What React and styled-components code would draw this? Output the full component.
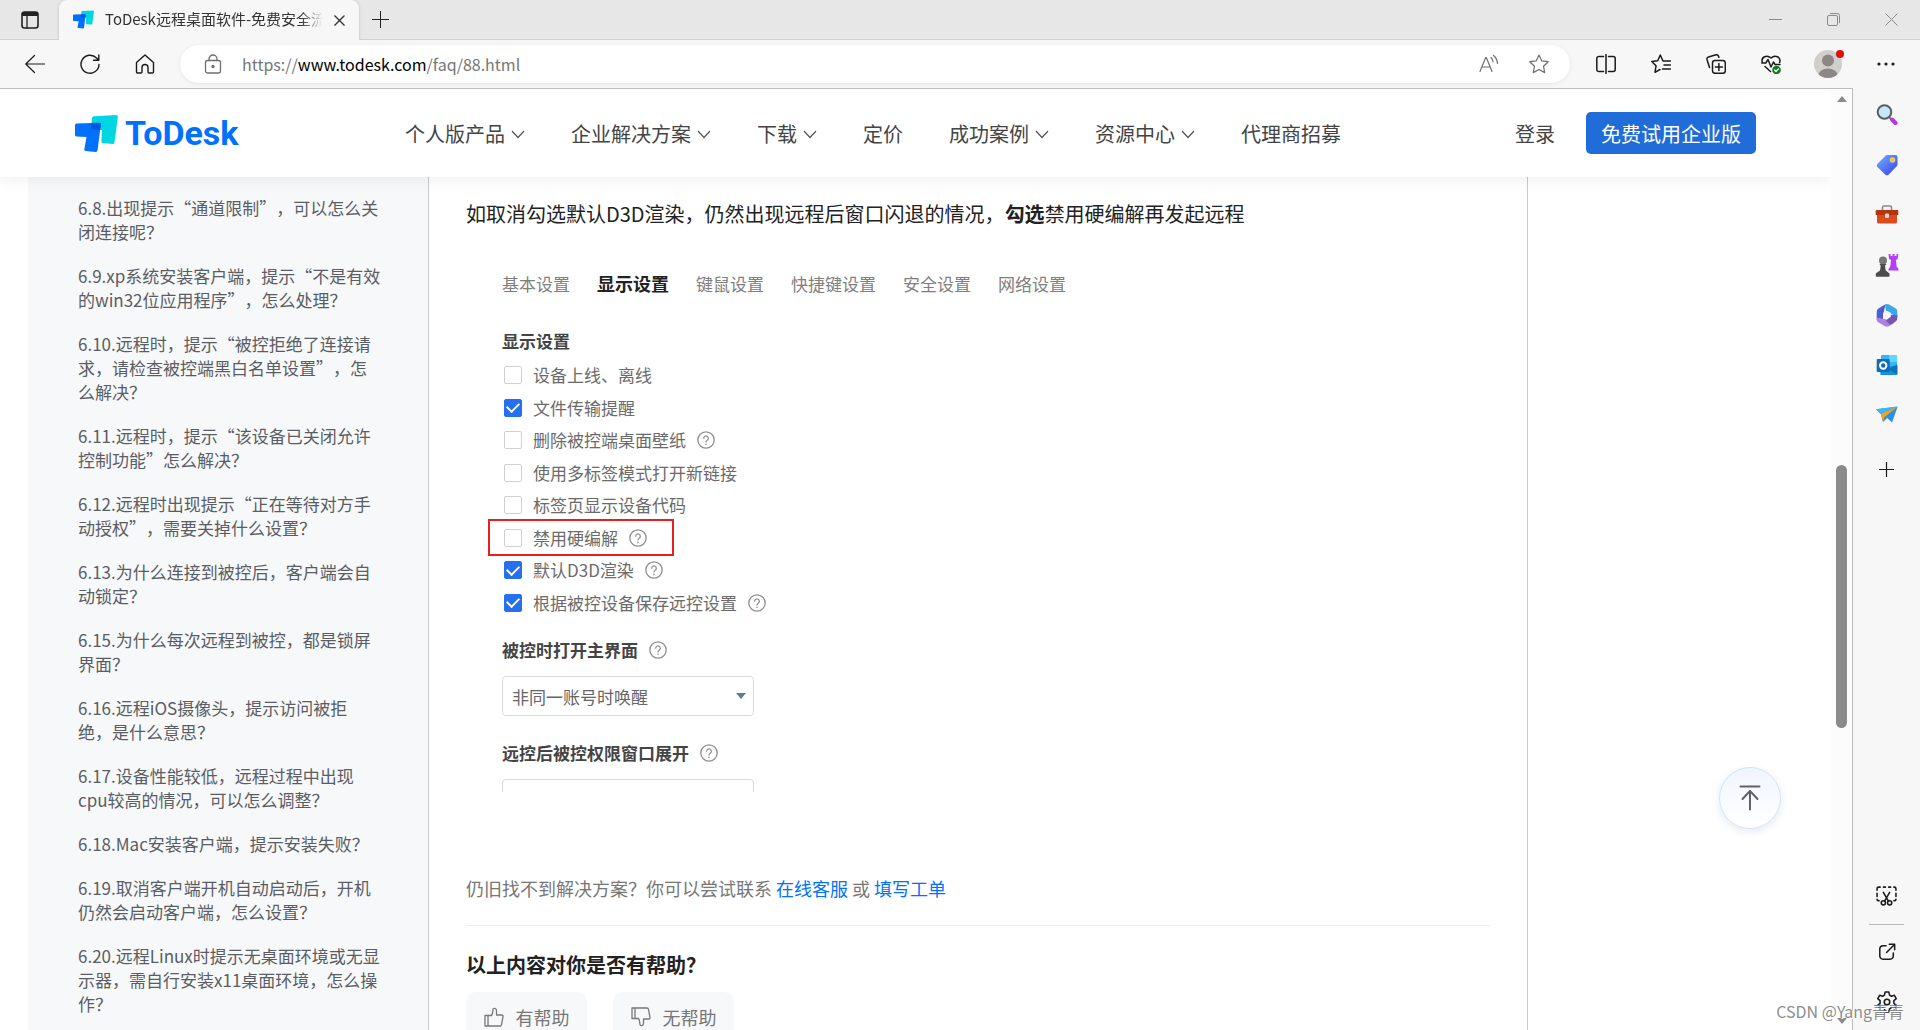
import React from 'react'
import styled, { createGlobalStyle } from 'styled-components'

const GlobalStyle = createGlobalStyle`
  * {
    box-sizing: border-box;
  }
  html, body, #root {
    height: 100%;
  }
  body {
    margin: 0;
    overflow: hidden;
    background: #fff;
    font-family: 'Noto Sans CJK SC', 'Noto Sans', sans-serif;
  }
  button, select, input {
    font-family: inherit;
    margin: 0;
  }
  button {
    border: 0;
    padding: 0;
    background: none;
    cursor: pointer;
  }
  a {
    text-decoration: none;
    color: inherit;
  }
  svg {
    display: block;
    flex: none;
  }
`

const faqs = [
  '6.8.出现提示“通道限制”，可以怎么关闭连接呢？',
  '6.9.xp系统安装客户端，提示“不是有效的win32位应用程序”，怎么处理？',
  '6.10.远程时，提示“被控拒绝了连接请求，请检查被控端黑白名单设置”，怎么解决？',
  '6.11.远程时，提示“该设备已关闭允许控制功能”怎么解决？',
  '6.12.远程时出现提示“正在等待对方手动授权”，需要关掉什么设置？',
  '6.13.为什么连接到被控后，客户端会自动锁定？',
  '6.15.为什么每次远程到被控，都是锁屏界面？',
  '6.16.远程iOS摄像头，提示访问被拒\n绝，是什么意思？',
  '6.17.设备性能较低，远程过程中出现cpu较高的情况，可以怎么调整？',
  '6.18.Mac安装客户端，提示安装失败？',
  '6.19.取消客户端开机自动启动后，开机仍然会启动客户端，怎么设置？',
  '6.20.远程Linux时提示无桌面环境或无显示器，需自行安装x11桌面环境，怎么操作？',
]

const navItems = [
  { text: '个人版产品', menu: true },
  { text: '企业解决方案', menu: true },
  { text: '下载', menu: true },
  { text: '定价' },
  { text: '成功案例', menu: true },
  { text: '资源中心', menu: true },
  { text: '代理商招募' },
]

const settingTabs = ['基本设置', '显示设置', '键鼠设置', '快捷键设置', '安全设置', '网络设置']

const options = [
  { id: 'online', text: '设备上线、离线' },
  { id: 'transfer', text: '文件传输提醒', checked: true },
  { id: 'wallpaper', text: '删除被控端桌面壁纸', help: true },
  { id: 'tabs', text: '使用多标签模式打开新链接' },
  { id: 'code', text: '标签页显示设备代码' },
  { id: 'codec', text: '禁用硬编解', help: true, marked: true },
  { id: 'd3d', text: '默认D3D渲染', checked: true, help: true },
  { id: 'save', text: '根据被控设备保存远控设置', checked: true, help: true },
]

/* ---------- icons ---------- */

const Icon = ({ size = 20, width = 1.2, children, ...rest }) => (
  <svg
    width={size}
    height={size}
    viewBox='0 0 20 20'
    fill='none'
    stroke='currentColor'
    strokeWidth={width}
    strokeLinecap='round'
    strokeLinejoin='round'
    aria-hidden='true'
    {...rest}
  >
    {children}
  </svg>
)

const LogoMark = ({ width, height }) => (
  <svg width={width} height={height} viewBox='0 0 43 37' aria-hidden='true'>
    <path d='M19 1.2 41.500 0Q43 0 42.900 1.500L39.500 27.500Q39.300 29 37.800 28.900L27.500 28Q26.300 27.800 26.400 26.500L27 15 17.500 14.500Q16 14.300 16.100 13L17 3Q17.200 1.300 19 1.200Z' fill='#00d5e2' />
    <path d='M1.500 8.500 24.500 7.800Q26 7.800 25.900 9.300L22.500 35.500Q22.200 37 20.800 36.900L10.500 36Q9.200 35.800 9.300 34.500L11.500 22 1.400 21.500Q0 21.400 0 20L0 10Q0 8.600 1.500 8.500Z' fill='#0071ff' />
    <path d='M16.500 8.100 24.500 7.800Q26 7.800 25.900 9.300L25 14.900 17.500 14.500Q16 14.300 16.100 13Z' fill='#0056e0' />
  </svg>
)

const Chevron = () => (
  <svg width='14' height='9' viewBox='0 0 14 9' fill='none' stroke='#555' strokeWidth='1.2' aria-hidden='true'>
    <path d='M1 1 7 7.500 13 1' />
  </svg>
)

const HelpIcon = () => (
  <svg width='18' height='18' viewBox='0 0 18 18' fill='none' stroke='#8f8f8f' strokeWidth='1.300' strokeLinecap='round' aria-hidden='true'>
    <circle cx='9' cy='9' r='8.200' />
    <path d='M6.700 7.200a2.300 2.300 0 1 1 3.500 2c-.9.500-1.200.9-1.200 1.700' />
    <path d='M9 13.200v.1' strokeWidth='1.600' />
  </svg>
)

const ThumbIcon = ({ down }) => (
  <Icon width={1.3} transform={down ? 'scale(1 -1)' : undefined}>
    <path d='M1 8.500h3v10.500H1zM4 8.500h3.500c1.200-1.500 1.300-3.500 1.500-6C9.200.7 12.500.8 12.500 3.500v4.500h5.300c1 0 1.400.7 1.200 1.600l-1.500 8c-.2.900-.7 1.400-1.500 1.400H4' />
  </Icon>
)

/* ---------- browser frame ---------- */

const Browser = styled.div`
  height: 100%;
  display: flex;
  flex-direction: column;
  background: #f7f7f7;
`

const TabStrip = styled.div`
  display: flex;
  height: 40px;
  flex: none;
  background: #e7e7e7;
  box-shadow: inset 0 -1px #d2d2d2;
  color: #222;
`

const StripButton = styled.button`
  display: grid;
  place-items: center;
  width: ${(p) => p.$width || 58}px;
  height: 32px;
  align-self: flex-start;
  padding-left: ${(p) => p.$left || 0}px;
  padding-top: ${(p) => p.$top || 0}px;
  color: ${(p) => p.$color || '#222'};
`

const Tab = styled.div`
  display: flex;
  align-items: center;
  gap: 11px;
  width: 300px;
  margin-left: 1px;
  padding: 0 14px;
  background: #f7f7f7;
  border-radius: 8px 8px 0 0;
  box-shadow: 0 0 3px #bbb;
  clip-path: inset(0 -4px 0 -4px);
`

const TabTitle = styled.span`
  flex: 1;
  min-width: 0;
  white-space: nowrap;
  font-size: 15px;
  line-height: 24px;
  margin-top: -2px;
  color: #333;
  mask-image: linear-gradient(to right, #000 90%, transparent);
`

const TabMark = styled.span`
  margin-top: -1px;
`

const WindowButtons = styled.div`
  display: flex;
  margin-left: auto;
  color: #8a8a8a;
`

const Toolbar = styled.div`
  display: flex;
  align-items: center;
  height: 48px;
  flex: none;
  color: #1b1b1b;
`

const ToolButton = styled.button`
  display: grid;
  place-items: center;
  position: relative;
  width: ${(p) => p.$width || 55}px;
  height: 40px;
  color: ${(p) => p.$color || '#1b1b1b'};
`

const NavButtons = styled.div`
  display: flex;
  width: 180px;
  padding-left: 7px;
`

const ToolButtons = styled.div`
  display: flex;
  align-items: center;
  padding: 0 7px 0 8px;
`

const AddressBar = styled.div`
  display: flex;
  align-items: center;
  flex: 1;
  height: 38px;
  padding: 0 6px 0 23px;
  border-radius: 19px;
  background: #fff;
  box-shadow: 0 1px 4px rgba(0, 0, 0, 0.08);
  color: #6f6f6f;
`

const Url = styled.a`
  flex: 1;
  margin-left: 19px;
  font-size: 16px;
  line-height: 24px;
  color: #767676;
  b {
    font-weight: 400;
    color: #000;
  }
`

const AddressButton = styled(ToolButton)`
  width: 50px;
  color: #6f6f6f;
`

const Avatar = styled.span`
  display: block;
  width: 28px;
  height: 28px;
  border-radius: 50%;
  background: #d1cfcc;
  overflow: hidden;
`

const AlertDot = styled.span`
  position: absolute;
  top: 6px;
  right: 14px;
  width: 8px;
  height: 8px;
  border-radius: 50%;
  background: #e30b0b;
`

const Body = styled.div`
  display: flex;
  flex: 1;
  min-height: 0;
`

/* ---------- side rail ---------- */

const Rail = styled.aside`
  display: flex;
  flex-direction: column;
  align-items: center;
  width: 67px;
  padding: 2px 0 3px;
`

const RailButton = styled.button`
  display: grid;
  place-items: center;
  width: 50px;
  height: ${(p) => p.$height || 50}px;
  color: #1b1b1b;
`

const RailRule = styled.hr`
  width: 35px;
  margin: 4px 0 2px;
  border: 0;
  border-top: 1px solid #b9b9b9;
`

const Spacer = styled.div`
  flex: 1;
`

/* ---------- web page ---------- */

const Viewport = styled.div`
  display: flex;
  flex: 1;
  min-width: 0;
  border-top: 1px solid #bdbdbd;
  border-right: 1px solid #bdbdbd;
  background: #fff;
`

const Page = styled.div`
  display: flex;
  flex-direction: column;
  flex: 1;
  min-width: 0;
  overflow: hidden;
  position: relative;
`

const Header = styled.header`
  display: flex;
  align-items: center;
  height: 88px;
  flex: none;
  padding: 0 75px;
  background: #fff;
  box-shadow: 0 4px 14px rgba(0, 0, 0, 0.06);
  position: relative;
  z-index: 1;
  font-size: 20px;
  color: #444;
`

const Brand = styled.a`
  display: flex;
  align-items: center;
  gap: 7px;
  width: 330px;
  font-family: Roboto, sans-serif;
  font-size: 34px;
  font-weight: 700;
  line-height: 37px;
  color: #0071ff;
`

const Nav = styled.nav`
  display: flex;
  gap: 46px;
  flex: 1;
`

const NavLink = styled.a`
  display: flex;
  align-items: center;
  gap: 6px;
  padding-top: 2px;
  line-height: 30px;
  white-space: nowrap;
`

const TrialButton = styled.button`
  height: 42px;
  margin-left: 31px;
  padding: 0 15px;
  border-radius: 5px;
  background: #206cd8;
  color: #fff;
  font-size: 20px;
`

const Columns = styled.div`
  display: flex;
  flex: 1;
  min-height: 0;
  padding-left: 28px;
`

const FaqList = styled.ul`
  display: flex;
  flex-direction: column;
  gap: 20px;
  width: 401px;
  flex: none;
  margin: 0;
  padding: 19px 46px 0 50px;
  border-right: 1px solid #c9cacd;
  background: #f7f8fa;
  list-style: none;
  font-size: 17px;
  line-height: 24px;
  text-spacing-trim: space-all;
  white-space: pre-line;
  color: #5a5d63;
`

const Article = styled.main`
  flex: 1;
  margin-right: 303px;
  padding: 19px 37px 0;
  border-right: 1px solid #c9cacd;
  overflow: hidden;
`

const Lead = styled.p`
  margin: 0;
  font-size: 20px;
  line-height: 36px;
  color: #222;
`

const Panel = styled.section`
  height: 560px;
  margin: 0 0 81px 16px;
  padding: 38px 0 0 20px;
  overflow: hidden;
  font-size: 17px;
  color: #6b6b6b;
`

const TabRow = styled.div`
  display: flex;
  gap: 27px;
  line-height: 32px;
`

const SettingTab = styled.button`
  font-size: ${(p) => (p.$active ? 18 : 17)}px;
  font-weight: ${(p) => (p.$active ? 700 : 400)};
  color: ${(p) => (p.$active ? '#222' : '#808080')};
`

const GroupTitle = styled.h3`
  display: flex;
  align-items: center;
  gap: 11px;
  margin: ${(p) => p.$top}px 0 0;
  font-size: 17px;
  line-height: 32px;
  color: #444;
`

const OptionList = styled.div`
  display: grid;
  grid-auto-rows: 1fr;
  justify-items: start;
  min-height: 260px;
  margin-top: 2px;
`

const OptionRow = styled.div`
  display: flex;
  align-items: center;
  gap: 11px;
  padding-left: 2px;
  position: relative;
  &::after {
    content: '';
    display: ${(p) => (p.$marked ? 'block' : 'none')};
    position: absolute;
    inset: -3px -27px -2px -14px;
    border: 2px solid #e5201f;
    pointer-events: none;
  }
`

const OptionLabel = styled.label`
  display: flex;
  align-items: center;
  gap: 11px;
  line-height: 24px;
`

const CheckBox = styled.input`
  appearance: none;
  width: 18px;
  height: 18px;
  border: 1px solid #d0d0d0;
  border-radius: 2px;
  background: #fff;
  display: grid;
  place-items: center;
  &:checked {
    border-color: #2470ee;
    background: #2470ee;
  }
  &:checked::before {
    content: '';
    width: 10px;
    height: 6px;
    margin-top: -3px;
    border: solid #fff;
    border-width: 0 0 2px 2px;
    transform: rotate(-45deg);
  }
`

const SelectBox = styled.div`
  position: relative;
  width: 252px;
  margin-top: 10px;
  &::after {
    content: '';
    position: absolute;
    top: 17px;
    right: 8px;
    border: 5px solid transparent;
    border-top: 6px solid #607d8b;
    border-bottom: 0;
    pointer-events: none;
  }
`

const Select = styled.select`
  appearance: none;
  width: 100%;
  height: 40px;
  padding: 0 9px;
  border: 1px solid #d9d9d9;
  border-radius: 4px;
  background: #fff;
  font-size: 17px;
  color: #666;
`

const Contact = styled.p`
  margin: 0;
  padding-bottom: 22px;
  border-bottom: 1px solid #ededed;
  font-size: 18px;
  line-height: 30px;
  color: #777;
  a {
    color: #0071ff;
  }
`

const Question = styled.h2`
  margin: 24px 0 12px;
  font-size: 20px;
  line-height: 30px;
  color: #222;
`

const Votes = styled.div`
  display: flex;
  gap: 26px;
`

const VoteButton = styled.button`
  display: flex;
  align-items: center;
  justify-content: center;
  gap: 12px;
  width: 121px;
  height: 50px;
  border-radius: 10px;
  background: #f7f8fa;
  font-size: 18px;
  color: #777;
`

const TopButton = styled.button`
  display: grid;
  place-items: center;
  position: absolute;
  right: 50px;
  bottom: 201px;
  width: 62px;
  height: 62px;
  border: 1px solid #cfe4fd;
  border-radius: 50%;
  background: linear-gradient(#f0f5fe, #fff);
  box-shadow: 0 3px 8px rgba(60, 90, 130, 0.12);
  color: #606266;
`

const ScrollBar = styled.div`
  display: flex;
  flex-direction: column;
  align-items: center;
  width: 21px;
  padding: 7px 0 6px;
  background: #fcfcfc;
`

const ScrollArrow = styled.span`
  border: 5px solid transparent;
  border-top: ${(p) => (p.$down ? '6px solid #8a8a8a' : '0')};
  border-bottom: ${(p) => (p.$down ? '0' : '6px solid #8a8a8a')};
`

const ScrollTrack = styled.div`
  display: flex;
  flex-direction: column;
  flex: 1;
`

const ScrollThumb = styled.div`
  width: 11px;
  flex: 263;
  border-radius: 6px;
  background: #8a8a8a;
`

const ScrollGap = styled.div`
  flex: ${(p) => p.$share};
`

const Watermark = styled.span`
  position: absolute;
  right: 16px;
  bottom: 7px;
  font-size: 16px;
  line-height: 24px;
  color: rgba(110, 110, 110, 0.8);
  text-shadow: 1px 1px #fff;
`

const BrowserTabs = () => (
  <TabStrip>
    <StripButton aria-label='Tab actions' $width={58} $left={2} $top={8}>
      <Icon width={1.6}>
        <rect x='2' y='2' width='16' height='16' rx='2.500' />
        <path d='M2 6V4.500A2.500 2.500 0 0 1 4.500 2h11A2.500 2.500 0 0 1 18 4.500V6Z' fill='currentColor' stroke='none' />
        <path d='M7 6v12' strokeWidth='1.300' />
      </Icon>
    </StripButton>
    <Tab>
      <TabMark><LogoMark width='21' height='19' /></TabMark>
      <TabTitle>ToDesk远程桌面软件-免费安全流</TabTitle>
      <button aria-label='Close tab'>
        <svg width='11' height='11' viewBox='0 0 11 11' stroke='#333' strokeWidth='1.400'>
          <path d='M.5.5l10 10M10.500.5l-10 10' />
        </svg>
      </button>
    </Tab>
    <StripButton aria-label='New tab' $width={43} $top={7}>
      <svg width='17' height='17' viewBox='0 0 17 17' stroke='currentColor' strokeWidth='1'>
        <path d='M8.500 0v17M0 8.500h17' />
      </svg>
    </StripButton>
    <WindowButtons>
      <StripButton aria-label='Minimize' $top={7} $color='#8a8a8a'>
        <svg width='13' height='13' stroke='currentColor'><path d='M0 6.500h13' /></svg>
      </StripButton>
      <StripButton aria-label='Restore' $top={7} $left={2} $color='#8a8a8a'>
        <svg width='14' height='14' fill='none' stroke='currentColor'>
          <rect x='.5' y='2.500' width='10' height='10' rx='1.500' />
          <path d='M3 .5h7.500a2 2 0 0 1 2 2V10' />
        </svg>
      </StripButton>
      <StripButton aria-label='Close window' $top={7} $color='#8a8a8a'>
        <svg width='13' height='13' stroke='currentColor'><path d='M.5.5l12 12M12.500.5l-12 12' /></svg>
      </StripButton>
    </WindowButtons>
  </TabStrip>
)

const BrowserToolbar = () => (
  <Toolbar>
    <NavButtons>
      <ToolButton aria-label='Back'>
        <Icon><path d='M19.500 10H.8M9.500 1.500.8 10l8.700 8.500' /></Icon>
      </ToolButton>
      <ToolButton aria-label='Refresh'>
        <Icon width={1.4}><path d='M19 10.500A9 9 0 1 1 16.500 4L18.500 6M18.800 1v5.300h-5.300' /></Icon>
      </ToolButton>
      <ToolButton aria-label='Home'>
        <Icon width={1.4}><path d='M1.500 8.500 10 1l8.500 7.500v9.300a1.200 1.200 0 0 1-1.200 1.200H14a1 1 0 0 1-1-1v-4.500a3 3 0 0 0-6 0V18a1 1 0 0 1-1 1H2.700a1.200 1.200 0 0 1-1.200-1.200Z' /></Icon>
      </ToolButton>
    </NavButtons>
    <AddressBar>
      <Icon width={1.3}>
        <rect x='2.500' y='6.500' width='15' height='12.500' rx='2' />
        <path d='M6 6.500V5a4 4 0 0 1 8 0v1.500' />
        <circle cx='10' cy='12.500' r='1' fill='currentColor' />
      </Icon>
      <Url href='#'>https://<b>www.todesk.com</b>/faq/88.html</Url>
      <AddressButton aria-label='Read aloud'>
        <Icon><path d='M1 17.500 6.700 3.500h.6L13 17.500M3 13h8M12 3.500c1.300 1 2 2.500 2 4.500M14.500 1.500c2.300 1.700 3.700 4.200 4 8' /></Icon>
      </AddressButton>
      <AddressButton aria-label='Favorite'>
        <Icon><path d='M10 1l2.800 5.900 6.400.8-4.700 4.500 1.200 6.400L10 15.500l-5.700 3.100 1.200-6.400L.8 7.700l6.400-.8Z' /></Icon>
      </AddressButton>
    </AddressBar>
    <ToolButtons>
      <ToolButton aria-label='Split screen'>
        <Icon width={1.5}><path d='M7.500 2.500H2.800A2 2 0 0 0 .8 4.500v11a2 2 0 0 0 2 2h4.700M12.500 2.500h4.700a2 2 0 0 1 2 2v11a2 2 0 0 1-2 2h-4.700M10 .5v19' /></Icon>
      </ToolButton>
      <ToolButton aria-label='Favorites list'>
        <Icon width={1.5}><path d='M13.300 7H12L9.300 1 6.700 6.700.8 7.500 5 11.800 4 18.300l5-2.800M12.500 7h7M13 11h6.500M11.500 15h8' /></Icon>
      </ToolButton>
      <ToolButton aria-label='Collections'>
        <Icon width={1.5}>
          <rect x='6.500' y='6.500' width='12.800' height='12.800' rx='2.500' />
          <path d='M12.900 9.500v7M9.400 13h7M3.500 13.500 1 5.500A2 2 0 0 1 2.500 3l7.500-2.200a2 2 0 0 1 2.500 1.500l.3 1' />
        </Icon>
      </ToolButton>
      <ToolButton aria-label='Browser essentials'>
        <Icon width={1.5}>
          <path d='M1.300 8.500C-.3 3 6 .2 10 4c4-3.800 10.300-1 8.700 4.500M.8 9h4L7 5.500l3 7.500 2.500-5 1.500 2.500h5M4 12.500l5.500 5' />
          <circle cx='15.500' cy='16' r='4.300' fill='#13791a' stroke='none' />
          <path d='M13.500 16l1.500 1.500 2.500-2.700' stroke='#fff' strokeWidth='1.200' />
        </Icon>
      </ToolButton>
      <ToolButton aria-label='Profile' $width={60}>
        <Avatar>
          <svg width='28' height='28' viewBox='0 0 28 28' fill='#8c8784' aria-hidden='true'>
            <circle cx='14' cy='10.500' r='6' />
            <ellipse cx='14' cy='26' rx='10' ry='7.500' />
          </svg>
        </Avatar>
        <AlertDot />
      </ToolButton>
      <ToolButton aria-label='Settings and more'>
        <svg width='18' height='4' fill='currentColor'>
          <circle cx='2' cy='2' r='1.600' /><circle cx='9' cy='2' r='1.600' /><circle cx='16' cy='2' r='1.600' />
        </svg>
      </ToolButton>
    </ToolButtons>
  </Toolbar>
)

const SideRail = () => (
  <Rail>
    <RailButton aria-label='Search'>
      <svg width='22' height='22' viewBox='0 0 22 22' strokeLinecap='round'>
        <path d='M14 14l2 2' stroke='#777' strokeWidth='2' />
        <path d='M16 15.500l3.500 3.500' stroke='#b636ee' strokeWidth='4' />
        <circle cx='8.500' cy='8' r='6.800' fill='#c3e8fb' stroke='#5e5e5e' strokeWidth='2' />
      </svg>
    </RailButton>
    <RailButton aria-label='Shopping'>
      <svg width='22' height='22' viewBox='0 0 22 22'>
        <defs>
          <linearGradient id='tag' x1='0' y1='0' x2='1' y2='1'>
            <stop offset='0' stopColor='#6fb6ff' /><stop offset='1' stopColor='#3a3bf0' />
          </linearGradient>
        </defs>
        <path d='M11 1h8.500Q21.500 1 21.500 3v7.500q0 1-.8 1.800l-8.200 8.400q-1.500 1.300-3 0L1.300 13q-1.200-1.500 0-3L9.500 1.700Q10.200 1 11 1Z' fill='url(#tag)' />
        <circle cx='16.500' cy='6' r='2' fill='#8fc4ff' stroke='#ffd02f' strokeWidth='1.600' />
      </svg>
    </RailButton>
    <RailButton aria-label='Tools'>
      <svg width='24' height='22' viewBox='0 0 24 22'>
        <path d='M7.500 6V3.500q0-1.500 1.500-1.500h6q1.500 0 1.500 1.500V6' fill='none' stroke='#8b8b8b' strokeWidth='1.600' />
        <path d='M2 9h20v9q0 1.500-1.500 1.500h-17Q2 19.500 2 18Z' fill='#dd4a1c' />
        <path d='M2 6h20q1.300 0 1.300 1.300V11H.7V7.300Q.7 6 2 6Z' fill='#b5330e' />
        <rect x='10' y='9.500' width='4' height='4.500' rx='1' fill='#d8d8d8' />
      </svg>
    </RailButton>
    <RailButton aria-label='Games'>
      <svg width='24' height='24' viewBox='0 0 24 24'>
        <path d='M13.500 1h2v2h2V1h2v2h2V1h1.800l-.6 5-1.700 1 .6 6.500 1.900 2.500v1.500h-10V16l1.800-2.500L16 7l-2-1Z' fill='#b43df5' />
        <circle cx='8' cy='7.500' r='4' fill='#777' />
        <path d='M4.500 11h7l-1.500 1.800.7 4.700 3.800 3v2.500q0 .7-.7.700H1.500q-.7 0-.7-.7V20.500l4.200-3 .7-4.700Z' fill='#4c4c4c' />
      </svg>
    </RailButton>
    <RailButton aria-label='Microsoft 365'>
      <svg width='22' height='24' viewBox='0 0 22 24'>
        <path d='M9 1.500Q11 .3 13 1.500l6.500 3.800q1.800 1 1.800 3v6L14 10.500 10 8Z' fill='#3ba8ea' />
        <path d='M9.500 1.300 2.500 5.400Q.7 6.500.7 8.500v8L7 17V12l1-4Z' fill='#4860d2' />
        <path d='M.7 14.500V17q0 1.500 1.500 2.300L9 23.300q2 .9 4 0l6-3.800L8.500 16Z' fill='#b07fe0' />
        <path d='M21.300 12v3.500q0 2-1.800 3l-5.500 3.300-4-4 5-5.800Z' fill='#7755b5' />
        <path d='M11 7.800l3.700 2v4.300L11 16.300l-3.700-2.200V9.800Z' fill='#f7f7f7' />
      </svg>
    </RailButton>
    <RailButton aria-label='Outlook'>
      <svg width='22' height='22' viewBox='0 0 22 22'>
        <rect x='5' y='1' width='16' height='14' rx='1' fill='#31b7f2' />
        <path d='M13 1h7q1 0 1 1v6h-8Z' fill='#5dd8fb' />
        <path d='M4 12h17.300v8q0 1-1 1H4.500Z' fill='#1490df' />
        <path d='M21.300 10.500v10L12 15Z' fill='#1270b8' />
        <rect x='.7' y='5' width='13' height='13' rx='1' fill='#0f6cbd' />
        <circle cx='7.200' cy='11.500' r='3.200' fill='none' stroke='#fff' strokeWidth='2' />
      </svg>
    </RailButton>
    <RailButton aria-label='Drop'>
      <svg width='22' height='20' viewBox='0 0 22 20'>
        <path d='M0 4.200 21.700 1.500 16 17.500 11.200 13 7 17 5 9.500Z' fill='#2f8fe8' />
        <path d='M0 4.200 21.700 1.500 5 8.800Z' fill='#3db6f2' />
        <path d='M5 8.800 21.700 1.500 8 12.500 7 17Z' fill='#f5a21b' />
      </svg>
    </RailButton>
    <RailButton aria-label='Customize' $height={58}>
      <svg width='15' height='15' stroke='currentColor' strokeWidth='1.200'><path d='M7.500 0v15M0 7.500h15' /></svg>
    </RailButton>
    <Spacer />
    <RailButton aria-label='Screenshot'>
      <Icon size={21} width={1.5}>
        <path d='M1 5V3.500A1.500 1.500 0 0 1 2.500 2H4M7 2h2M12 2h2M17 2h.5A1.500 1.500 0 0 1 19 3.500V5M19 8v3M1 8v3M1 13.500Q1 15 3 15M19 13.500q0 1.500-2 1.500' />
        <path d='M7 7l5 8.500M13 7l-5 8.500' />
        <circle cx='7' cy='17' r='2' /><circle cx='13' cy='17' r='2' />
      </Icon>
    </RailButton>
    <RailRule />
    <RailButton aria-label='Open in window'>
      <Icon size={18} width={1.7}><path d='M9 3H5.500A3.500 3.500 0 0 0 2 6.500v8A3.500 3.500 0 0 0 5.500 18h8a3.500 3.500 0 0 0 3.500-3.500V11M12.500 1.500H18.500V7.500M18.300 1.700 9.500 10.500' /></Icon>
    </RailButton>
    <RailButton aria-label='Settings'>
      <Icon size={22} width={1.4}>
        <path d='M8.300 1h3.400l.6 2.800 1.700 1 2.700-.9 1.700 3-2.100 1.900v2.400l2.100 1.900-1.700 3-2.700-.9-1.700 1-.6 2.800H8.300l-.6-2.800-1.700-1-2.700.9-1.700-3 2.100-1.900V8.800L1.600 6.900l1.700-3 2.700.9 1.700-1Z' />
        <circle cx='10' cy='10' r='2.500' />
      </Icon>
    </RailButton>
  </Rail>
)

const SiteHeader = () => (
  <Header>
    <Brand href='#'>
      <LogoMark width='43' height='37' />
      ToDesk
    </Brand>
    <Nav>
      {navItems.map((item) => (
        <NavLink href='#' key={item.text}>
          {item.text}
          {item.menu && <Chevron />}
        </NavLink>
      ))}
    </Nav>
    <NavLink href='#'>登录</NavLink>
    <TrialButton>免费试用企业版</TrialButton>
  </Header>
)

const SettingsPanel = () => (
  <Panel>
    <TabRow>
      {settingTabs.map((tab) => (
        <SettingTab key={tab} $active={tab === '显示设置'}>{tab}</SettingTab>
      ))}
    </TabRow>
    <GroupTitle $top={29}>显示设置</GroupTitle>
    <OptionList>
      {options.map(({ id, text, checked, help, marked }) => (
        <OptionRow key={id} $marked={marked}>
          <OptionLabel htmlFor={id}>
            <CheckBox type='checkbox' id={id} defaultChecked={checked} />
            {text}
          </OptionLabel>
          {help && <HelpIcon />}
        </OptionRow>
      ))}
    </OptionList>
    <GroupTitle $top={15}>
      <label htmlFor='wake'>被控时打开主界面</label>
      <HelpIcon />
    </GroupTitle>
    <SelectBox>
      <Select id='wake'>
        <option>非同一账号时唤醒</option>
      </Select>
    </SelectBox>
    <GroupTitle $top={21}>
      <label htmlFor='expand'>远控后被控权限窗口展开</label>
      <HelpIcon />
    </GroupTitle>
    <SelectBox>
      <Select id='expand' />
    </SelectBox>
  </Panel>
)

const App = () => {
  return (
    <Browser lang='zh-CN'>
      <GlobalStyle />
      <BrowserTabs />
      <BrowserToolbar />
      <Body>
        <Viewport>
          <Page>
            <SiteHeader />
            <Columns>
              <FaqList>
                {faqs.map((faq) => (
                  <li key={faq}><a href='#'>{faq}</a></li>
                ))}
              </FaqList>
              <Article>
                <Lead>
                  如取消勾选默认D3D渲染，仍然出现远程后窗口闪退的情况，<b>勾选</b>禁用硬编解再发起远程
                </Lead>
                <SettingsPanel />
                <Contact>
                  仍旧找不到解决方案？你可以尝试联系 <a href='#'>在线客服</a> 或 <a href='#'>填写工单</a>
                </Contact>
                <Question>以上内容对你是否有帮助？</Question>
                <Votes>
                  <VoteButton><ThumbIcon />有帮助</VoteButton>
                  <VoteButton><ThumbIcon down />无帮助</VoteButton>
                </Votes>
              </Article>
            </Columns>
            <TopButton aria-label='Back to top'>
              <svg width='22' height='26' viewBox='0 0 22 26' fill='none' stroke='currentColor' strokeWidth='2' strokeLinecap='round' strokeLinejoin='round'>
                <path d='M1.500 1.500h19M11 24.500V6M3.500 14 11 6l7.500 8' />
              </svg>
            </TopButton>
          </Page>
          <ScrollBar>
            <ScrollArrow />
            <ScrollTrack>
              <ScrollGap $share={363} />
              <ScrollThumb />
              <ScrollGap $share={290} />
            </ScrollTrack>
            <ScrollArrow $down />
          </ScrollBar>
        </Viewport>
        <SideRail />
      </Body>
      <Watermark>CSDN @Yang青青</Watermark>
    </Browser>
  )
}

export default App
